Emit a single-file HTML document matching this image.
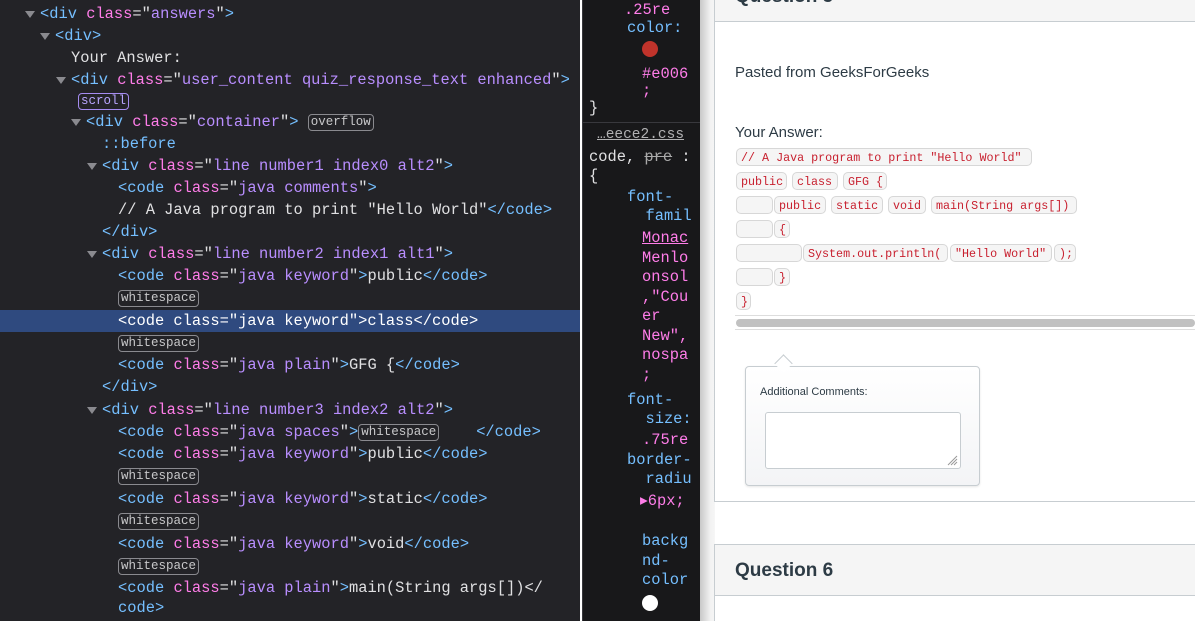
<!DOCTYPE html><html style="overflow:hidden;height:621px"><head><style>
body{margin:0;width:1195px;height:621px;overflow:hidden;position:relative;background:#fff;font-family:"Liberation Mono",monospace}
#l{position:absolute;left:0;top:0;width:580px;height:621px;background:#232327}
#m{position:absolute;left:582px;top:0;width:118px;height:621px;background:#18181a;border-left:1px solid #38383d;overflow:hidden}
.r{position:absolute;white-space:pre;font-size:15.4px;line-height:22px;color:#e0e0e2}
.t{color:#75bfff}.a{color:#ff7de9}.v{color:#b98eff}
.tri{position:absolute;width:0;height:0;border-left:5px solid transparent;border-right:5px solid transparent;border-top:7px solid #8a8a8f}
.b{display:inline-block;border:1px solid #8a8a8f;border-radius:4px;font-size:12.5px;line-height:15px;padding:0 2px;color:#c8c8ca;vertical-align:1px}
.bp{border-color:#a58cf0;color:#b9a6ff}
.p{color:#75bfff}.k{color:#ff7de9}
#pg{position:absolute;left:700px;top:0;width:495px;height:621px;background:#fff}
#sh{position:absolute;left:700px;top:0;width:15px;height:621px;background:linear-gradient(90deg,#c8c8c8,#f2f2f2 70%,#f6f6f6)}
.card{position:absolute;left:714px;width:481px;border:1px solid #c7cdd1;border-right:none;background:#fff;overflow:hidden}
.s{font-family:"Liberation Sans",sans-serif;color:#2d3b45;position:absolute}
.pill{position:absolute;height:18px;border:1px solid #d7d7d7;border-radius:5px;background:#f5f5f5;font-size:11.7px;line-height:18px;color:#c8202f;padding:0 0 0 4px;box-sizing:border-box;white-space:pre}
</style></head><body>
<div id="l">
<div style="position:absolute;left:0;top:310px;width:580px;height:22px;background:#2f4a7f"></div>
<div class="tri" style="left:25px;top:11px"></div>
<div class="r" style="left:40px;top:3px"><span class="t">&lt;div</span> <span class="a">class</span>="<span class="v">answers</span>"<span class="t">&gt;</span></div>
<div class="tri" style="left:40px;top:33px"></div>
<div class="r" style="left:55px;top:25px"><span class="t">&lt;div&gt;</span></div>
<div class="r" style="left:71px;top:47px">Your Answer:</div>
<div class="tri" style="left:56px;top:77px"></div>
<div class="r" style="left:71px;top:69px"><span class="t">&lt;div</span> <span class="a">class</span>="<span class="v">user_content quiz_response_text enhanced</span>"<span class="t">&gt;</span></div>
<div class="r" style="left:78px;top:90px"><span class="b bp">scroll</span></div>
<div class="tri" style="left:71px;top:119px"></div>
<div class="r" style="left:86px;top:111px"><span class="t">&lt;div</span> <span class="a">class</span>="<span class="v">container</span>"<span class="t">&gt;</span> <span class="b">overflow</span></div>
<div class="r" style="left:102px;top:133px"><span class="t">::before</span></div>
<div class="tri" style="left:87px;top:163px"></div>
<div class="r" style="left:102px;top:155px"><span class="t">&lt;div</span> <span class="a">class</span>="<span class="v">line number1 index0 alt2</span>"<span class="t">&gt;</span></div>
<div class="r" style="left:118px;top:177px"><span class="t">&lt;code</span> <span class="a">class</span>="<span class="v">java comments</span>"<span class="t">&gt;</span></div>
<div class="r" style="left:118px;top:199px">// A Java program to print "Hello World"<span class="t">&lt;/code&gt;</span></div>
<div class="r" style="left:102px;top:221px"><span class="t">&lt;/div&gt;</span></div>
<div class="tri" style="left:87px;top:251px"></div>
<div class="r" style="left:102px;top:243px"><span class="t">&lt;div</span> <span class="a">class</span>="<span class="v">line number2 index1 alt1</span>"<span class="t">&gt;</span></div>
<div class="r" style="left:118px;top:265px"><span class="t">&lt;code</span> <span class="a">class</span>="<span class="v">java keyword</span>"<span class="t">&gt;</span>public<span class="t">&lt;/code&gt;</span></div>
<div class="r" style="left:118px;top:287px"><span class="b">whitespace</span></div>
<div class="r" style="left:118px;top:310px;color:#fff">&lt;code class="java keyword"&gt;class&lt;/code&gt;</div>
<div class="r" style="left:118px;top:332px"><span class="b">whitespace</span></div>
<div class="r" style="left:118px;top:354px"><span class="t">&lt;code</span> <span class="a">class</span>="<span class="v">java plain</span>"<span class="t">&gt;</span>GFG {<span class="t">&lt;/code&gt;</span></div>
<div class="r" style="left:102px;top:376px"><span class="t">&lt;/div&gt;</span></div>
<div class="tri" style="left:87px;top:407px"></div>
<div class="r" style="left:102px;top:399px"><span class="t">&lt;div</span> <span class="a">class</span>="<span class="v">line number3 index2 alt2</span>"<span class="t">&gt;</span></div>
<div class="r" style="left:118px;top:421px"><span class="t">&lt;code</span> <span class="a">class</span>="<span class="v">java spaces</span>"<span class="t">&gt;</span><span class="b">whitespace</span>    <span class="t">&lt;/code&gt;</span></div>
<div class="r" style="left:118px;top:443px"><span class="t">&lt;code</span> <span class="a">class</span>="<span class="v">java keyword</span>"<span class="t">&gt;</span>public<span class="t">&lt;/code&gt;</span></div>
<div class="r" style="left:118px;top:465px"><span class="b">whitespace</span></div>
<div class="r" style="left:118px;top:488px"><span class="t">&lt;code</span> <span class="a">class</span>="<span class="v">java keyword</span>"<span class="t">&gt;</span>static<span class="t">&lt;/code&gt;</span></div>
<div class="r" style="left:118px;top:510px"><span class="b">whitespace</span></div>
<div class="r" style="left:118px;top:533px"><span class="t">&lt;code</span> <span class="a">class</span>="<span class="v">java keyword</span>"<span class="t">&gt;</span>void<span class="t">&lt;/code&gt;</span></div>
<div class="r" style="left:118px;top:555px"><span class="b">whitespace</span></div>
<div class="r" style="left:118px;top:577px"><span class="t">&lt;code</span> <span class="a">class</span>="<span class="v">java plain</span>"<span class="t">&gt;</span>main(String args[])&lt;/</div>
<div class="r" style="left:118px;top:597px"><span class="t">code&gt;</span></div>
</div>
<div id="m">
<div class="r" style="left:41px;top:-1px;color:#ff7de9">.25re</div>
<div class="r" style="left:44px;top:17px"><span class="p">color:</span></div>
<div style="position:absolute;left:59px;top:41px;width:16px;height:16px;border-radius:50%;background:#c0332b"></div>
<div class="r" style="left:59px;top:63px;color:#ff7de9">#e006</div>
<div class="r" style="left:59px;top:80px;color:#ff7de9">;</div>
<div class="r" style="left:6px;top:97px">}</div>
<div style="position:absolute;left:0;top:122px;width:118px;height:1px;background:#38383d"></div>
<div class="r" style="left:14px;top:124px;color:#b1b1b3;font-size:14.5px"><span style="text-decoration:underline">…eece2.css</span></div>
<div class="r" style="left:6px;top:146px">code, <s style="color:#aaa">pre</s> :</div>
<div class="r" style="left:6px;top:165px">{</div>
<div class="r p" style="left:44px;top:188px;line-height:19px">font-
  famil</div>
<div class="r k" style="left:59px;top:229px;line-height:19.5px"><u>Monac</u>
Menlo
onsol
,"Cou
er
New",
nospa
;</div>
<div class="r p" style="left:44px;top:391px;line-height:19px">font-
  size:</div>
<div class="r k" style="left:59px;top:429px">.75re</div>
<div class="r p" style="left:44px;top:451px;line-height:19px">border-
  radiu</div>
<div class="r k" style="left:57px;top:490px">▸6px;</div>
<div class="r p" style="left:59px;top:532px;line-height:19.5px">backg
nd-
color</div>
<div style="position:absolute;left:59px;top:595px;width:16px;height:16px;border-radius:50%;background:#fff"></div>
</div>
<div id="pg"></div><div id="sh"></div>
<div class="card" style="top:-30px;height:530px">
<div style="height:50px;background:#f5f5f5;border-bottom:1px solid #c7cdd1"></div>
</div>
<div class="s" style="left:735px;top:-14px;font-size:19px;font-weight:bold">Question 5</div>
<div class="s" style="left:735px;top:64px;font-size:15px">Pasted from GeeksForGeeks</div>
<div class="s" style="left:735px;top:124px;font-size:15px">Your Answer:</div>
<div class="pill" style="left:736px;top:148px;width:296px">// A Java program to print "Hello World"</div>
<div class="pill" style="left:736px;top:172px;width:51px">public</div>
<div class="pill" style="left:792px;top:172px;width:46px">class</div>
<div class="pill" style="left:843px;top:172px;width:44px">GFG {</div>
<div class="pill" style="left:736px;top:196px;width:37px"></div>
<div class="pill" style="left:774px;top:196px;width:52px">public</div>
<div class="pill" style="left:831px;top:196px;width:52px">static</div>
<div class="pill" style="left:888px;top:196px;width:38px">void</div>
<div class="pill" style="left:931px;top:196px;width:146px">main(String args[])</div>
<div class="pill" style="left:736px;top:220px;width:37px"></div>
<div class="pill" style="left:774px;top:220px;width:16px">{</div>
<div class="pill" style="left:736px;top:244px;width:66px"></div>
<div class="pill" style="left:803px;top:244px;width:145px">System.out.println(</div>
<div class="pill" style="left:950px;top:244px;width:102px">"Hello World"</div>
<div class="pill" style="left:1054px;top:244px;width:22px">);</div>
<div class="pill" style="left:736px;top:268px;width:37px"></div>
<div class="pill" style="left:774px;top:268px;width:16px">}</div>
<div class="pill" style="left:736px;top:292px;width:15px">}</div>
<div style="position:absolute;left:735px;top:315px;width:460px;height:1px;background:#ddd"></div>
<div style="position:absolute;left:736px;top:319px;width:459px;height:8px;border-radius:4px;background:#c1c1c1"></div>
<div style="position:absolute;left:735px;top:329px;width:460px;height:1px;background:#ddd"></div>
<div style="position:absolute;left:745px;top:366px;width:233px;height:118px;border:1px solid #c7cdd1;border-radius:4px;background:linear-gradient(#fff,#f3f4f6);box-shadow:0 1px 2px rgba(0,0,0,.1)"></div>
<div style="position:absolute;left:777px;top:357px;width:12px;height:12px;background:#fff;border-left:1px solid #c7cdd1;border-top:1px solid #c7cdd1;transform:rotate(45deg)"></div>
<div class="s" style="left:760px;top:386px;font-size:11px">Additional Comments:</div>
<div style="position:absolute;left:765px;top:412px;width:194px;height:55px;border:1px solid #c7cdd1;border-radius:3px;background:#fff"></div>
<svg style="position:absolute;left:946px;top:454px" width="12" height="12"><path d="M11 2L2 11M11 5L5 11M11 8L8 11" stroke="#999" stroke-width="1"/></svg>
<div class="card" style="top:544px;height:90px">
<div style="height:50px;background:#f5f5f5;border-bottom:1px solid #c7cdd1"></div>
</div>
<div class="s" style="left:735px;top:560px;font-size:19px;font-weight:bold">Question 6</div>
</body></html>
